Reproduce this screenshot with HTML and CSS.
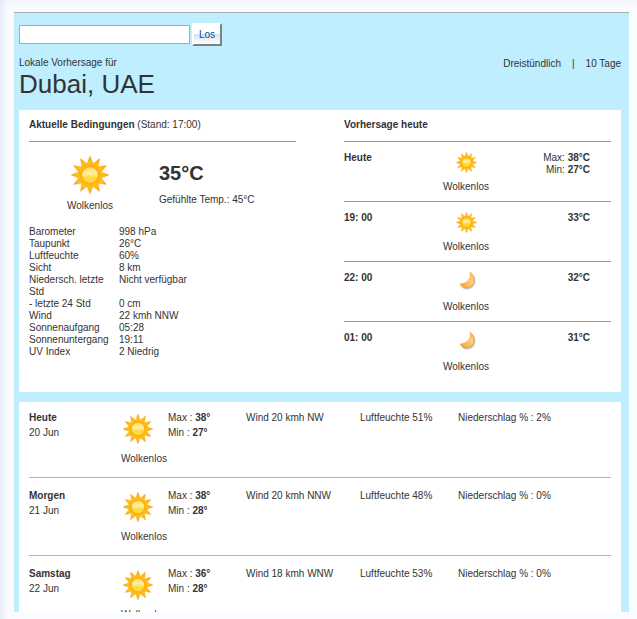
FILE: index.html
```
<!DOCTYPE html>
<html lang="de">
<head>
    <meta charset="UTF-8">
    <title>Wetter Dubai, UAE</title>
    <link rel="stylesheet" href="styles.css">
</head>
<body>
<svg class="defs" aria-hidden="true">
    <defs>
        <radialGradient id="rays">
            <stop offset="0.4" stop-color="#feb00c"/>
            <stop offset="0.7" stop-color="#fec01c"/>
            <stop offset="1" stop-color="#f59a1a"/>
        </radialGradient>
        <linearGradient id="disc" x1="0" y1="0" x2="0" y2="1">
            <stop offset="0" stop-color="#ffd95c"/>
            <stop offset="0.4" stop-color="#fff0a8"/>
            <stop offset="0.7" stop-color="#fdd835"/>
            <stop offset="1" stop-color="#ffe14d"/>
        </linearGradient>
        <linearGradient id="crescent" x1="0" y1="1" x2="1" y2="0">
            <stop offset="0" stop-color="#f59a1f"/>
            <stop offset="0.6" stop-color="#ffd27a"/>
            <stop offset="1" stop-color="#f7b64a"/>
        </linearGradient>
    </defs>
    <symbol id="sun" viewBox="0 0 100 100">
        <polygon fill="url(#rays)" stroke="#f9a51a" stroke-width="1" points="50,0 58,20 75,6.7 71.9,28.1 93.3,25 80,42 100,50 80,58 93.3,75 71.9,71.9 75,93.3 58,80 50,100 42,80 25,93.3 28.1,71.9 6.7,75 20,58 0,50 20,42 6.7,25 28.1,28.1 25,6.7 42,20"/>
        <circle cx="50" cy="50" r="22" fill="url(#disc)" stroke="#fdae14" stroke-width="3"/>
    </symbol>
    <symbol id="moon" viewBox="0 0 21 21">
        <path fill="#c4c4c4" d="M15 1C17 7 12 14 5 14C8 19 14 18 17 15C21 11 20 4 15 1Z"/>
        <path fill="url(#crescent)" stroke="#ee9c2c" stroke-width="0.6" d="M14 0C16 6 11 12 4 12C7 17 13 17 16 13C20 9 18 3 14 0Z"/>
    </symbol>
</svg>

<div class="weather">
    <form class="search">
        <input type="text" class="search-box" aria-label="Ort suchen">
        <button type="button" class="search-button">Los</button>
    </form>

    <div class="title-bar">
        <div>
            <div class="subtitle">Lokale Vorhersage für</div>
            <h1>Dubai, UAE</h1>
        </div>
        <div class="links">
            <a href="#">Dreistündlich</a>
            <span>|</span>
            <a href="#">10 Tage</a>
        </div>
    </div>

    <div class="panel today">
        <div class="current">
            <h2>Aktuelle Bedingungen <span>(Stand: 17:00)</span></h2>
            <div class="now">
                <div class="now-icon">
                    <svg width="38" height="38"><use href="#sun"/></svg>
                    <div>Wolkenlos</div>
                </div>
                <div>
                    <div class="temp">35°C</div>
                    <div>Gefühlte Temp.: 45°C</div>
                </div>
            </div>
            <table class="details">
                <tr><th>Barometer</th><td>998 hPa</td></tr>
                <tr><th>Taupunkt</th><td>26°C</td></tr>
                <tr><th>Luftfeuchte</th><td>60%</td></tr>
                <tr><th>Sicht</th><td>8 km</td></tr>
                <tr><th>Niedersch. letzte Std</th><td>Nicht verfügbar</td></tr>
                <tr><th>- letzte 24 Std</th><td>0 cm</td></tr>
                <tr><th>Wind</th><td>22 kmh NNW</td></tr>
                <tr><th>Sonnenaufgang</th><td>05:28</td></tr>
                <tr><th>Sonnenuntergang</th><td>19:11</td></tr>
                <tr><th>UV Index</th><td>2 Niedrig</td></tr>
            </table>
        </div>
        <div class="hours">
            <h2>Vorhersage heute</h2>
            <div class="hour">
                <b>Heute</b>
                <div class="hour-icon">
                    <svg width="21" height="21"><use href="#sun"/></svg>
                    <div>Wolkenlos</div>
                </div>
                <div class="hour-temp">Max: <b>38°C</b><br>Min: <b>27°C</b></div>
            </div>
            <div class="hour">
                <b>19: 00</b>
                <div class="hour-icon">
                    <svg width="21" height="21"><use href="#sun"/></svg>
                    <div>Wolkenlos</div>
                </div>
                <div class="hour-temp"><b>33°C</b></div>
            </div>
            <div class="hour">
                <b>22: 00</b>
                <div class="hour-icon">
                    <svg width="21" height="21"><use href="#moon"/></svg>
                    <div>Wolkenlos</div>
                </div>
                <div class="hour-temp"><b>32°C</b></div>
            </div>
            <div class="hour">
                <b>01: 00</b>
                <div class="hour-icon">
                    <svg width="21" height="21"><use href="#moon"/></svg>
                    <div>Wolkenlos</div>
                </div>
                <div class="hour-temp"><b>31°C</b></div>
            </div>
        </div>
    </div>

    <div class="panel">
        <table class="days">
            <colgroup>
                <col class="col-day">
                <col class="col-icon">
                <col class="col-temp">
                <col class="col-wind">
                <col class="col-humidity">
                <col>
            </colgroup>
            <tr>
                <td><b>Heute</b><br>20 Jun</td>
                <td class="day-icon"><svg width="30" height="30"><use href="#sun"/></svg><div>Wolkenlos</div></td>
                <td>Max : <b>38°</b><br>Min : <b>27°</b></td>
                <td>Wind 20 kmh NW</td>
                <td>Luftfeuchte 51%</td>
                <td>Niederschlag % : 2%</td>
            </tr>
            <tr>
                <td><b>Morgen</b><br>21 Jun</td>
                <td class="day-icon"><svg width="30" height="30"><use href="#sun"/></svg><div>Wolkenlos</div></td>
                <td>Max : <b>38°</b><br>Min : <b>28°</b></td>
                <td>Wind 20 kmh NNW</td>
                <td>Luftfeuchte 48%</td>
                <td>Niederschlag % : 0%</td>
            </tr>
            <tr>
                <td><b>Samstag</b><br>22 Jun</td>
                <td class="day-icon"><svg width="30" height="30"><use href="#sun"/></svg><div>Wolkenlos</div></td>
                <td>Max : <b>36°</b><br>Min : <b>28°</b></td>
                <td>Wind 18 kmh WNW</td>
                <td>Luftfeuchte 53%</td>
                <td>Niederschlag % : 0%</td>
            </tr>
        </table>
    </div>
</div>
</body>
</html>
```

FILE: styles.css
```
* {
    box-sizing: border-box;
}

body {
    height: 100vh;
    margin: 0;
    padding: 12px 8px 7px 14px;
    overflow: hidden;
    font-family: Arial, "Liberation Sans", sans-serif;
    font-size: 10px;
    line-height: 12px;
    color: #333;
    background: linear-gradient(to right, #e6eefa, rgba(250, 251, 254, 0) 8px),
                linear-gradient(#f3f5fc, #fafbfe 6px);
}

.defs {
    position: absolute;
    width: 0;
    height: 0;
}

svg {
    display: block;
}

.weather {
    height: 100%;
    padding: 10px 8px 0 5px;
    overflow: hidden;
    border-top: 1px solid #aaa;
    background-color: #bfeeff;
}

.search {
    display: flex;
    align-items: center;
    gap: 2px;
}

.search-box {
    width: 171px;
    height: 19px;
    padding: 0 4px;
    border: 1px solid #aaa;
    background-color: #fff;
    font: inherit;
}

.search-button {
    width: 30px;
    height: 23px;
    padding: 0;
    border: 2px solid;
    border-color: #fff #808080 #808080 #fff;
    background: linear-gradient(#fff 45%, #d5e3f0 50%, #fff);
    font: inherit;
    color: #00529b;
}

.title-bar {
    display: flex;
    justify-content: space-between;
    padding: 11px 0;
}

h1 {
    margin: 0;
    font-size: 26px;
    line-height: 30px;
    font-weight: normal;
}

.links {
    display: flex;
    gap: 11px;
    padding-top: 1px;
}

.links a {
    color: #333;
    text-decoration: none;
}

.panel {
    margin-bottom: 10px;
    padding: 0 10px;
    background-color: #fff;
}

.today {
    display: grid;
    grid-template-columns: 1fr 1fr;
    column-gap: 48px;
    padding-top: 9px;
    padding-bottom: 11px;
}

h2 {
    margin: 0;
    padding-bottom: 10px;
    border-bottom: 1px solid #999;
    font-size: 10px;
    line-height: 12px;
}

h2 span {
    font-weight: normal;
}

.now {
    display: flex;
    padding: 14px 0;
}

.now-icon {
    width: 130px;
    padding-right: 8px;
    text-align: center;
}

.now-icon svg {
    margin: 0 auto 6px;
}

.temp {
    padding: 6px 0 10px;
    font-size: 20px;
    line-height: 22px;
    font-weight: bold;
}

.details,
.days {
    width: 100%;
    border-collapse: collapse;
    table-layout: fixed;
}

.details th,
.details td {
    padding: 0;
    vertical-align: top;
    text-align: left;
    font-weight: normal;
}

.details th {
    width: 90px;
}

.hour {
    display: grid;
    grid-template-columns: 82px 80px 1fr;
    padding: 10px 21px 8px 0;
    border-bottom: 1px solid #999;
}

.hour:last-child {
    border-bottom: none;
}

.hour-icon {
    text-align: center;
}

.hour-icon svg {
    margin: 0 auto 8px;
}

.hour-temp {
    text-align: right;
}

.days td {
    padding: 10px 0 11px;
    border-bottom: 1px solid #b3b3b3;
    line-height: 15px;
    vertical-align: top;
}

.days tr:first-child td {
    padding-top: 8px;
}

.day-icon svg {
    margin: 4px 0 7px 2px;
}

.col-day {
    width: 92px;
}

.col-icon {
    width: 47px;
}

.col-temp {
    width: 78px;
}

.col-wind {
    width: 114px;
}

.col-humidity {
    width: 98px;
}
```
